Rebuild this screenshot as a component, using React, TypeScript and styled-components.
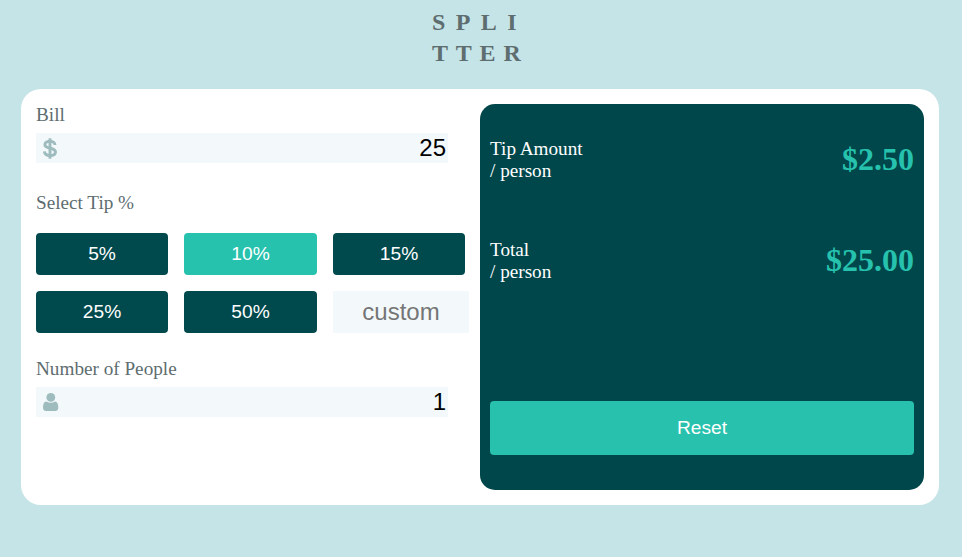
import React from "react";
import styled, { createGlobalStyle } from "styled-components";

const Global = createGlobalStyle`
  * { box-sizing: border-box; }
  body {
    margin: 0;
    background: #c5e4e7;
    font-family: "Liberation Serif", serif;
    overflow: hidden;
  }
`;
const Page = styled.div`
  height: 557px;
  display: flex;
  flex-direction: column;
  align-items: center;
`;
const Logo = styled.h1`
  margin: 7px 0 0;
  width: 98px;
  height: 82px;
  font-size: 24px;
  line-height: 31px;
  color: #5e6d6f;
  white-space: nowrap;
`;
const LogoLine = styled.span<{ $spacing: number }>`
  display: block;
  letter-spacing: ${(p) => p.$spacing}px;
`;
const Card = styled.main`
  width: 918px;
  height: 416px;
  margin-right: 2px;
  padding: 15px;
  border-radius: 20px;
  background: #fff;
  display: flex;
`;
const Form = styled.section`
  width: 444px;
  display: flex;
  flex-direction: column;
`;
const Label = styled.label<{ $top: number; $gap: number }>`
  margin-top: ${(p) => p.$top}px;
  margin-bottom: ${(p) => p.$gap}px;
  font-size: 19.2px;
  line-height: 22px;
  color: #5e6d6f;
`;
const Field = styled.div`
  width: 412px;
  height: 30px;
  padding: 0 2px 0 7px;
  display: flex;
  align-items: center;
  justify-content: space-between;
  background: #f3f8fb;
  color: #9ebbbd;
`;
const Input = styled.input`
  width: 340px;
  height: 30px;
  padding: 0;
  border: 0;
  background: transparent;
  color: #000;
  text-align: right;
  font: 24px "Liberation Sans", sans-serif;
`;
const Tips = styled.div`
  display: grid;
  grid-template-columns: 132px 133px 132px;
  gap: 16px;
`;
const Tip = styled.button<{ $active?: boolean }>`
  height: 42px;
  padding: 0;
  border: 0;
  border-radius: 4px;
  background: ${(p) => (p.$active ? "#26c2ae" : "#00494d")};
  color: #fff;
  font: 19.2px "Liberation Sans", sans-serif;
`;
const Custom = styled.input`
  width: 136px;
  height: 42px;
  padding: 0;
  border: 0;
  background: #f3f8fb;
  text-align: center;
  font: 24px "Liberation Sans", sans-serif;
  &::placeholder { color: #757575; }
`;
const Result = styled.section`
  width: 444px;
  height: 386px;
  padding: 34px 10px 35px;
  border-radius: 15px;
  background: #00474b;
  display: flex;
  flex-direction: column;
`;
const Row = styled.div`
  height: 44px;
  margin-bottom: 57px;
  display: flex;
  justify-content: space-between;
  align-items: center;
  color: #fff;
  font-size: 19.2px;
  line-height: 22px;
`;
const Amount = styled.strong`
  padding-bottom: 2px;
  color: #26c2ae;
  font-size: 32px;
  line-height: 36px;
`;
const Reset = styled.button`
  height: 54px;
  margin-top: auto;
  border: 0;
  border-radius: 4px;
  background: #28c1ad;
  color: #fff;
  font: 19.2px "Liberation Sans", sans-serif;
`;

const tips = [5, 10, 15, 25, 50];

export default function App() {
  return (
    <Page>
      <Global />
      <Logo>
        <LogoLine $spacing={10.4}>SPLI</LogoLine>
        <LogoLine $spacing={7.8}>TTER</LogoLine>
      </Logo>
      <Card>
        <Form>
          <Label $top={0} $gap={7}>Bill</Label>
          <Field>
            <svg width="14" height="21" viewBox="0 0 14 21" fill="none" stroke="currentColor">
              <path d="M12 7C11.8 4.6 10 3.4 7 3.4C4 3.4 1.9 4.6 1.9 6.8C1.9 11.6 12.5 8.8 12.5 14C12.5 16.4 10.3 17.5 7 17.5C3.6 17.5 1.6 16 1.4 13.4" strokeWidth="2.9" />
              <path d="M7 0.3V20.7" strokeWidth="2.9" />
            </svg>
            <Input defaultValue="25" />
          </Field>
          <Label $top={29} $gap={19}>Select Tip %</Label>
          <Tips>
            {tips.map((t) => <Tip key={t} $active={t === 10}>{t}%</Tip>)}
            <Custom placeholder="custom" />
          </Tips>
          <Label $top={25} $gap={7}>Number of People</Label>
          <Field>
            <svg width="16" height="18" viewBox="0 0 16 18" fill="currentColor">
              <circle cx="7.8" cy="4.4" r="4.4" />
              <path d="M3.3 8.4C1 8.6 0 11 0 14.6Q0 18 3 18H12.3Q15.3 18 15.3 14.6C15.3 11 14.3 8.6 12 8.4Q7.8 11.3 3.3 8.4Z" />
            </svg>
            <Input defaultValue="1" />
          </Field>
        </Form>
        <Result>
          <Row><div>Tip Amount<br />/ person</div><Amount>$2.50</Amount></Row>
          <Row><div>Total<br />/ person</div><Amount>$25.00</Amount></Row>
          <Reset>Reset</Reset>
        </Result>
      </Card>
    </Page>
  );
}
